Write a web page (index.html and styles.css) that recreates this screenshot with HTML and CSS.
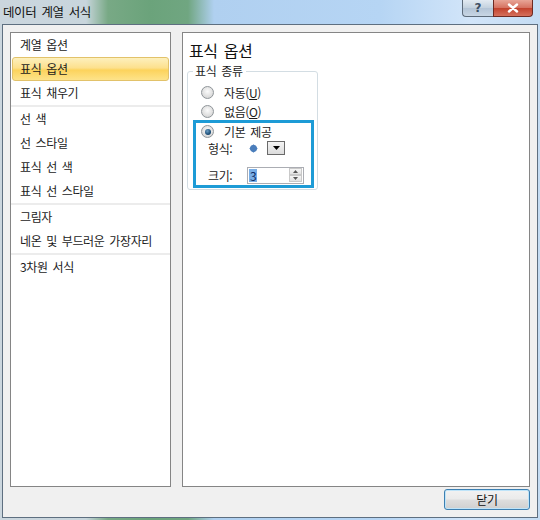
FILE: index.html
```html
<!DOCTYPE html>
<html lang="ko">
<head>
    <meta charset="UTF-8">
    <title>데이터 계열 서식</title>
    <link rel="stylesheet" href="styles.css">
</head>
<body>
<div class="window">
    <!-- Title bar -->
    <div class="titlebar">
        <span class="title">데이터 계열 서식</span>
        <div class="caption-btns">
            <div class="cap help">?</div>
            <div class="cap close">
                <svg width="12" height="10" viewBox="0 0 12 10"><path d="M2 1.5 L10 8.5 M10 1.5 L2 8.5" stroke="#fff" stroke-width="2.4" stroke-linecap="round"/></svg>
            </div>
        </div>
    </div>

    <div class="client">
        <div class="panes">
            <!-- Category list -->
            <ul class="nav">
                <li>계열 옵션</li>
                <li class="active">표식 옵션</li>
                <li>표식 채우기</li>
                <li class="sep"></li>
                <li>선 색</li>
                <li>선 스타일</li>
                <li>표식 선 색</li>
                <li>표식 선 스타일</li>
                <li class="sep"></li>
                <li>그림자</li>
                <li>네온 및 부드러운 가장자리</li>
                <li class="sep"></li>
                <li>3차원 서식</li>
            </ul>

            <!-- Marker options page -->
            <div class="page">
                <h2 class="page-title">표식 옵션</h2>
                <fieldset class="group">
                    <legend>표식 종류</legend>
                    <div class="radio-row"><span class="radio"></span>자동(<u>U</u>)</div>
                    <div class="radio-row second"><span class="radio"></span>없음(<u>O</u>)</div>
                    <div class="callout">
                        <div class="radio-row third"><span class="radio checked"></span>기본 제공</div>
                        <div class="field">
                            <span class="field-label">형식:</span>
                            <div class="combo">
                                <span class="marker"><svg width="9" height="9" viewBox="0 0 9 9"><path d="M4.5 0.3 L8.7 4.5 L4.5 8.7 L0.3 4.5 Z" fill="#4f81bd"/><circle cx="4.5" cy="4.5" r="3.4" fill="#4a7dbb"/></svg></span>
                                <span class="combo-btn"><svg width="7" height="4" viewBox="0 0 7 4"><path d="M0 0 H7 L3.5 4 Z" fill="#000"/></svg></span>
                            </div>
                        </div>
                        <div class="field size">
                            <span class="field-label">크기:</span>
                            <div class="spin">
                                <span class="spin-value">3</span>
                                <span class="spin-btns">
                                    <span class="spin-btn"><svg width="5" height="3" viewBox="0 0 5 3"><path d="M0 3 H5 L2.5 0 Z" fill="#555"/></svg></span>
                                    <span class="spin-btn"><svg width="5" height="3" viewBox="0 0 5 3"><path d="M0 0 H5 L2.5 3 Z" fill="#555"/></svg></span>
                                </span>
                            </div>
                        </div>
                    </div>
                </fieldset>
            </div>
        </div>

        <div class="footer">
            <button class="btn">닫기</button>
        </div>
    </div>
</div>
</body>
</html>
```

FILE: styles.css
```css
body {
  margin: 0;
  font-family: "Noto Sans CJK KR", "Noto Sans", sans-serif;
  font-size: 12px;
  letter-spacing: -0.4px;
  word-spacing: 2px;
  color: #1b1b1b;
}

/* Window frame */
.window {
  width: 540px;
  height: 520px;
  display: flex;
  flex-direction: column;
  background: linear-gradient(90deg, #cbd6de 0, #c8d5dc 86px, #78a985 108px, #6ba37b 150px, #70a681 188px, #b0d0f0 214px, #b6d5f4 380px, #d2e5f9 470px, #c4dcf3 540px);
}

.titlebar {
  height: 24px;
  display: flex;
  justify-content: space-between;
  align-items: flex-start;
}

.title {
  padding-left: 3px;
  line-height: 24px;
  font-size: 12.5px;
  color: #111;
}

.caption-btns {
  display: flex;
  margin-right: 7px;
}

.cap {
  height: 17px;
  box-sizing: border-box;
  display: flex;
  align-items: center;
  justify-content: center;
  border: 1px solid #5d6b7a;
  border-top: none;
}

.cap.help {
  width: 31px;
  border-right: none;
  border-bottom-left-radius: 4px;
  background: linear-gradient(#e2eaf2, #c3d1de 50%, #b3c4d6 51%, #c8d6e4);
  color: #3d4f63;
  font-family: "DejaVu Sans", sans-serif;
  font-size: 12px;
  font-weight: bold;
  letter-spacing: 0;
}

.cap.close {
  width: 40px;
  border-color: #6e2a22;
  border-bottom-right-radius: 4px;
  background: linear-gradient(#e8a597, #d5705f 50%, #c2412c 51%, #d5705c);
}

.client {
  height: 494px;
  box-sizing: border-box;
  margin: 0 2px;
  border: 1px solid #5e6f80;
  background: #f0f0f0;
  padding: 7px;
  display: flex;
  flex-direction: column;
}

.panes {
  height: 455px;
  display: flex;
  gap: 11px;
}

/* Category list */
.nav {
  width: 161px;
  box-sizing: border-box;
  margin: 0;
  padding: 0;
  list-style: none;
  background: #fff;
  border: 1px solid #858585;
}

.nav li {
  height: 24px;
  line-height: 24px;
  margin: 0 1px;
  padding-left: 8px;
  box-sizing: border-box;
}

.nav li.active {
  border: 1px solid #e2c26a;
  border-radius: 3px;
  padding-left: 7px;
  line-height: 22px;
  background: linear-gradient(#fdf0bd, #fde08d 45%, #fcd35c 55%, #fde38a);
}

.nav li.sep {
  height: 2px;
  margin: 0;
  background: #ececec;
}

/* Right page */
.page {
  width: 348px;
  box-sizing: border-box;
  background: #fff;
  border: 1px solid #858585;
  padding: 0 4px;
}

.page-title {
  margin: 7px 0 4px 2px;
  font-size: 16px;
  font-weight: normal;
  line-height: 20px;
  color: #111;
}

.group {
  width: 131px;
  box-sizing: border-box;
  margin: 0;
  padding: 4px 0 1px 0;
  border: 1px solid #d3dde3;
  border-radius: 3px;
}

.group legend {
  margin-left: 5px;
  padding: 0 3px 0 2px;
  line-height: 14px;
}

.radio-row {
  height: 20px;
  display: flex;
  align-items: center;
  padding-left: 13px;
}

.radio-row.second {
  height: 19px;
}

.radio-row.third {
  height: 17px;
  padding-left: 5px;
}

.radio {
  width: 13px;
  height: 13px;
  box-sizing: border-box;
  border-radius: 50%;
  border: 1px solid #8f9599;
  background: radial-gradient(circle at 50% 40%, #fbfbfb, #dadada 70%, #cfcfcf);
  margin-right: 10px;
  position: relative;
  flex: none;
}

.radio.checked::after {
  content: "";
  position: absolute;
  left: 2.5px;
  top: 2.5px;
  width: 6px;
  height: 6px;
  border-radius: 50%;
  background: radial-gradient(circle at 40% 35%, #6c9ec4, #1d4f78 60%, #10314e);
}

/* Highlighted box */
.callout {
  margin: -1px 3px 0 5px;
  border: 3px solid #1d9bd6;
  padding-bottom: 1px;
}

.field {
  height: 16px;
  display: flex;
  align-items: center;
  padding-left: 12px;
}

.field.size {
  height: 18px;
  margin-top: 10px;
}

.field-label {
  width: 39px;
}

.combo {
  display: flex;
  align-items: center;
  height: 14px;
}

.marker {
  width: 20px;
  display: flex;
  align-items: center;
  padding-left: 2px;
  box-sizing: border-box;
}

.combo-btn {
  width: 18px;
  height: 14px;
  box-sizing: border-box;
  border: 1px solid #6a6a6a;
  background: linear-gradient(#f4f4f4, #dcdcdc);
  display: flex;
  align-items: center;
  justify-content: center;
}

.spin {
  width: 57px;
  height: 17px;
  box-sizing: border-box;
  border: 1px solid #abadb3;
  background: #fff;
  display: flex;
  align-items: center;
  justify-content: space-between;
}

.spin-value {
  margin-left: 1px;
  padding: 0 1px;
  line-height: 13px;
  background: #79aee6;
  color: #0d2c66;
}

.spin-btns {
  display: flex;
  flex-direction: column;
  margin-right: 1px;
}

.spin-btn {
  width: 13px;
  height: 7px;
  display: flex;
  align-items: center;
  justify-content: center;
  background: linear-gradient(#f6f6f6, #e2e2e2);
  border: 1px solid #c9c9c9;
  box-sizing: border-box;
}

/* Footer */
.footer {
  margin-top: 2px;
  display: flex;
  justify-content: flex-end;
}

.btn {
  width: 86px;
  height: 21px;
  border: 1px solid #3c7fb1;
  border-radius: 3px;
  background: linear-gradient(#f2f2f2, #ebebeb 45%, #dddddd 55%, #cfcfcf);
  box-shadow: inset 0 0 0 1px #bfe4f9;
  font-family: inherit;
  font-size: 12px;
  letter-spacing: inherit;
  color: #111;
  padding: 0;
}
```
